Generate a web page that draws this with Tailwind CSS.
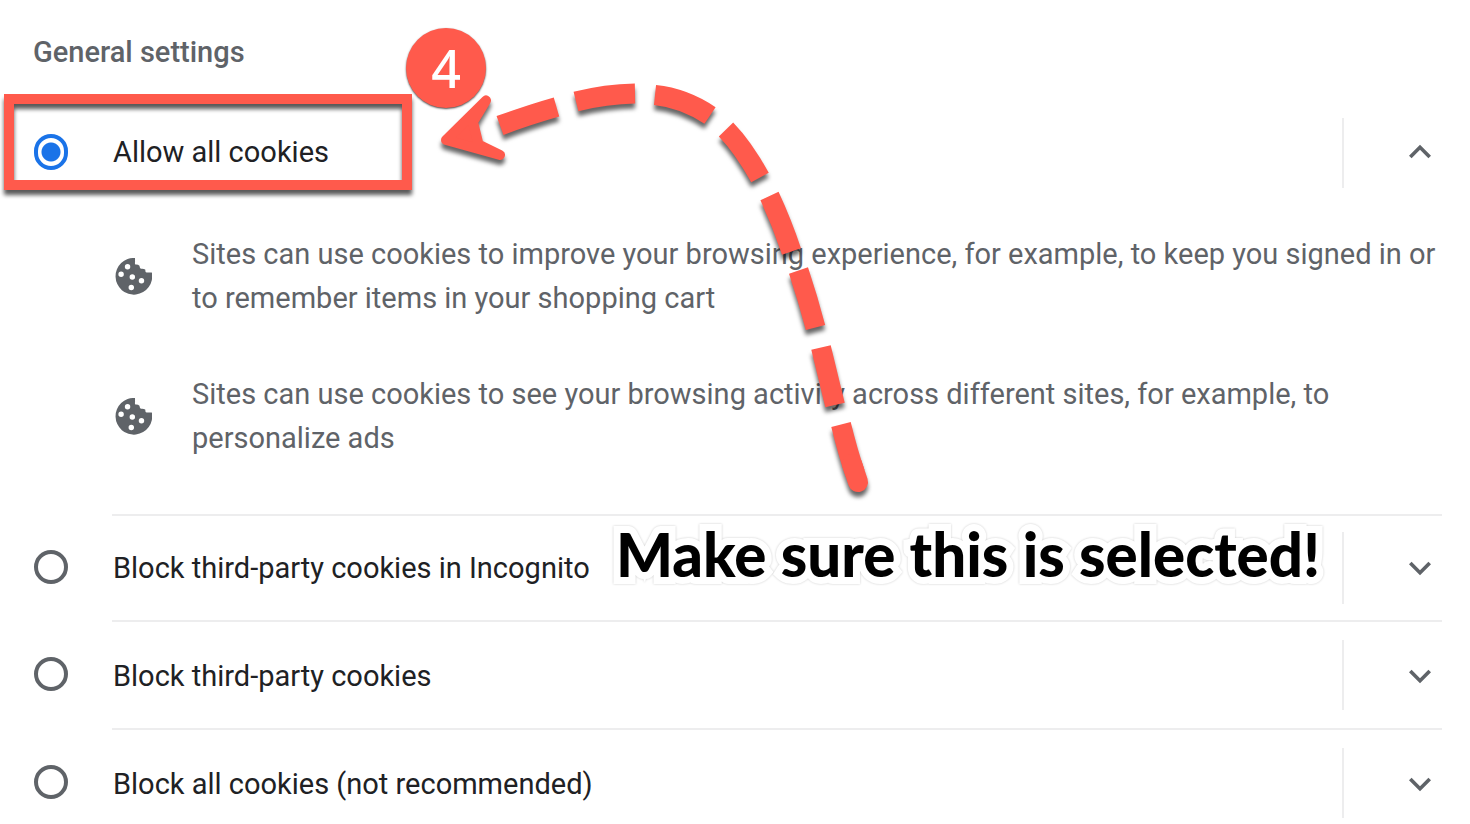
<!DOCTYPE html>
<html lang="en">
<head>
<meta charset="utf-8">
<meta name="viewport" content="width=device-width, initial-scale=1">
<title>Cookie settings</title>
<script src="https://cdn.jsdelivr.net/npm/@tailwindcss/browser@4"></script>
</head>
<body class="bg-white font-['Roboto',sans-serif] text-[29px] leading-[44px] text-[#202124]">
<svg class="hidden" aria-hidden="true">
  <symbol id="down" viewBox="0 0 24 24"><path d="M7.41 8.59 12 13.17l4.59-4.58L18 10l-6 6-6-6z"/></symbol>
  <symbol id="up" viewBox="0 0 24 24"><path d="M7.41 15.41 12 10.83l4.59 4.58L18 14l-6-6-6 6z"/></symbol>
  <symbol id="cookie" viewBox="48 54 109 109">
    <path fill-rule="evenodd" d="M107 54A54 54 0 1 0 156.500 97H141Q137 97 137 88Q132 85 124 86Q121 84 120 77Q116 72 108 73Q106 72 107 66ZM77 80a8 8 0 1 0 16 0a8 8 0 1 0-16 0M58 102a8 8 0 1 0 16 0a8 8 0 1 0-16 0M91 110a8 8 0 1 0 16 0a8 8 0 1 0-16 0M118 121a8 8 0 1 0 16 0a8 8 0 1 0-16 0M88 141a8 8 0 1 0 16 0a8 8 0 1 0-16 0"/>
  </symbol>
</svg>
<main class="relative overflow-hidden pt-[30px]">
  <h2 class="pl-[33px] font-medium text-[#5f6368]">General settings</h2>
  <form class="pt-11">
    <section class="flex">
      <div class="flex h-[70px] w-[112px] shrink-0 items-center pb-0.5 pl-[34px]">
        <input id="allow" type="radio" name="cookies" checked class="h-9 w-[34px] appearance-none rounded-full border-4 border-[#5f6368] bg-white checked:border-[#1a73e8] checked:bg-[radial-gradient(circle,#1a73e8_9px,white_10px)]">
      </div>
      <div class="mr-7 flex-1">
        <div class="flex h-[70px] items-center">
          <label for="allow" class="flex-1 pb-0.5 pl-px">Allow all cookies</label>
          <button type="button" aria-label="Collapse" class="flex h-full w-[100px] items-center justify-end border-l-2 border-[#ededee] pb-0.5 text-[#5f6368]"><svg class="size-11 fill-current"><use href="#up"/></svg></button>
        </div>
        <ul class="flex flex-col gap-[52px] pt-11 pb-[54px] text-[#5f6368]">
          <li class="flex items-center"><div class="w-20 shrink-0 pl-[3px]"><svg class="size-[37px] fill-current"><use href="#cookie"/></svg></div><p>Sites can use cookies to improve your browsing experience, for example, to keep you signed in or to remember items in your shopping cart</p></li>
          <li class="flex items-center"><div class="w-20 shrink-0 pl-[3px]"><svg class="size-[37px] fill-current"><use href="#cookie"/></svg></div><p>Sites can use cookies to see your browsing activity across different sites, for example, to personalize ads</p></li>
        </ul>
      </div>
    </section>
    <section class="flex items-center">
      <div class="w-[112px] shrink-0 pl-[34px]"><input id="incognito" type="radio" name="cookies" class="block size-[34px] appearance-none rounded-full border-4 border-[#5f6368] bg-white"></div>
      <div class="mr-7 flex flex-1 items-center border-t-2 border-[#ededee] py-4">
        <label for="incognito" class="flex-1 pl-px">Block third-party cookies in Incognito</label>
        <button type="button" aria-label="Expand" class="flex h-[72px] w-[100px] items-center justify-end border-l-2 border-[#ededee] text-[#5f6368]"><svg class="size-11 fill-current"><use href="#down"/></svg></button>
      </div>
    </section>
    <section class="flex items-center">
      <div class="w-[112px] shrink-0 pl-[34px]"><input id="third" type="radio" name="cookies" class="block size-[34px] appearance-none rounded-full border-4 border-[#5f6368] bg-white"></div>
      <div class="mr-7 flex flex-1 items-center border-t-2 border-[#ededee] py-[18px]">
        <label for="third" class="flex-1 pt-0.5 pl-px">Block third-party cookies</label>
        <button type="button" aria-label="Expand" class="flex h-[70px] w-[100px] items-center justify-end border-l-2 border-[#ededee] pt-0.5 text-[#5f6368]"><svg class="size-11 fill-current"><use href="#down"/></svg></button>
      </div>
    </section>
    <section class="flex items-end">
      <div class="flex h-[70px] w-[112px] shrink-0 items-center pb-0.5 pl-[34px]"><input id="all" type="radio" name="cookies" class="block size-[34px] appearance-none rounded-full border-4 border-[#5f6368] bg-white"></div>
      <div class="mr-7 flex flex-1 items-center border-t-2 border-[#ededee] pt-[18px]">
        <label for="all" class="flex-1 pt-0.5 pl-px">Block all cookies (not recommended)</label>
        <button type="button" aria-label="Expand" class="flex h-[70px] w-[100px] items-center justify-end border-l-2 border-[#ededee] pt-0.5 text-[#5f6368]"><svg class="size-11 fill-current"><use href="#down"/></svg></button>
      </div>
    </section>
  </form>

  <!-- Annotations laid over the settings -->
  <div class="pointer-events-none absolute top-[94px] left-1 h-24 w-[408px] border-10 border-[#ff5a4c] drop-shadow-[0_5px_2px_rgba(0,0,0,0.65)]"></div>
  <div class="pointer-events-none absolute top-7 left-[406px] flex size-20 items-center justify-center rounded-full bg-[#ff5a4c] font-['Noto_Sans',sans-serif] text-[52px] font-medium text-white shadow-[0_1px_2px_rgba(0,0,0,0.7)]">4</div>
  <svg class="pointer-events-none absolute top-0 left-0 h-[520px] w-[900px] drop-shadow-[0_5px_2px_rgba(0,0,0,0.6)]" viewBox="0 0 900 520" fill="none" stroke="#ff5a4c" aria-hidden="true">
    <path fill="#ff5a4c" stroke-width="10" stroke-linejoin="round" d="M486 100.500 446 140 500 155 478.500 144.500 473 122Z"/>
    <path stroke-width="20" d="M500 125.500Q530 114.500 556.500 107M576 101.500Q606 94 635 93.500M655 95Q684 98 710 115.500M726 129.500Q743 147 760 177.500M769.500 196Q782 223 791.500 251.500M798.500 270.500Q808 299 815.500 327.500M821 347.500Q828 376 835 405M841 424.500Q848 453 855 473"/>
    <path stroke-width="20" stroke-linecap="round" d="M852 464 858 482"/>
  </svg>
  <p class="pointer-events-none absolute top-[518px] left-[616px] font-['Lato',sans-serif] text-[60px] leading-[72px] font-black whitespace-nowrap text-black [-webkit-text-stroke:14px_white] [paint-order:stroke_fill] [stroke-linejoin:round] drop-shadow-[0_0_1px_rgba(0,0,0,0.2)]">Make sure this is selected!</p>
</main>
</body>
</html>
